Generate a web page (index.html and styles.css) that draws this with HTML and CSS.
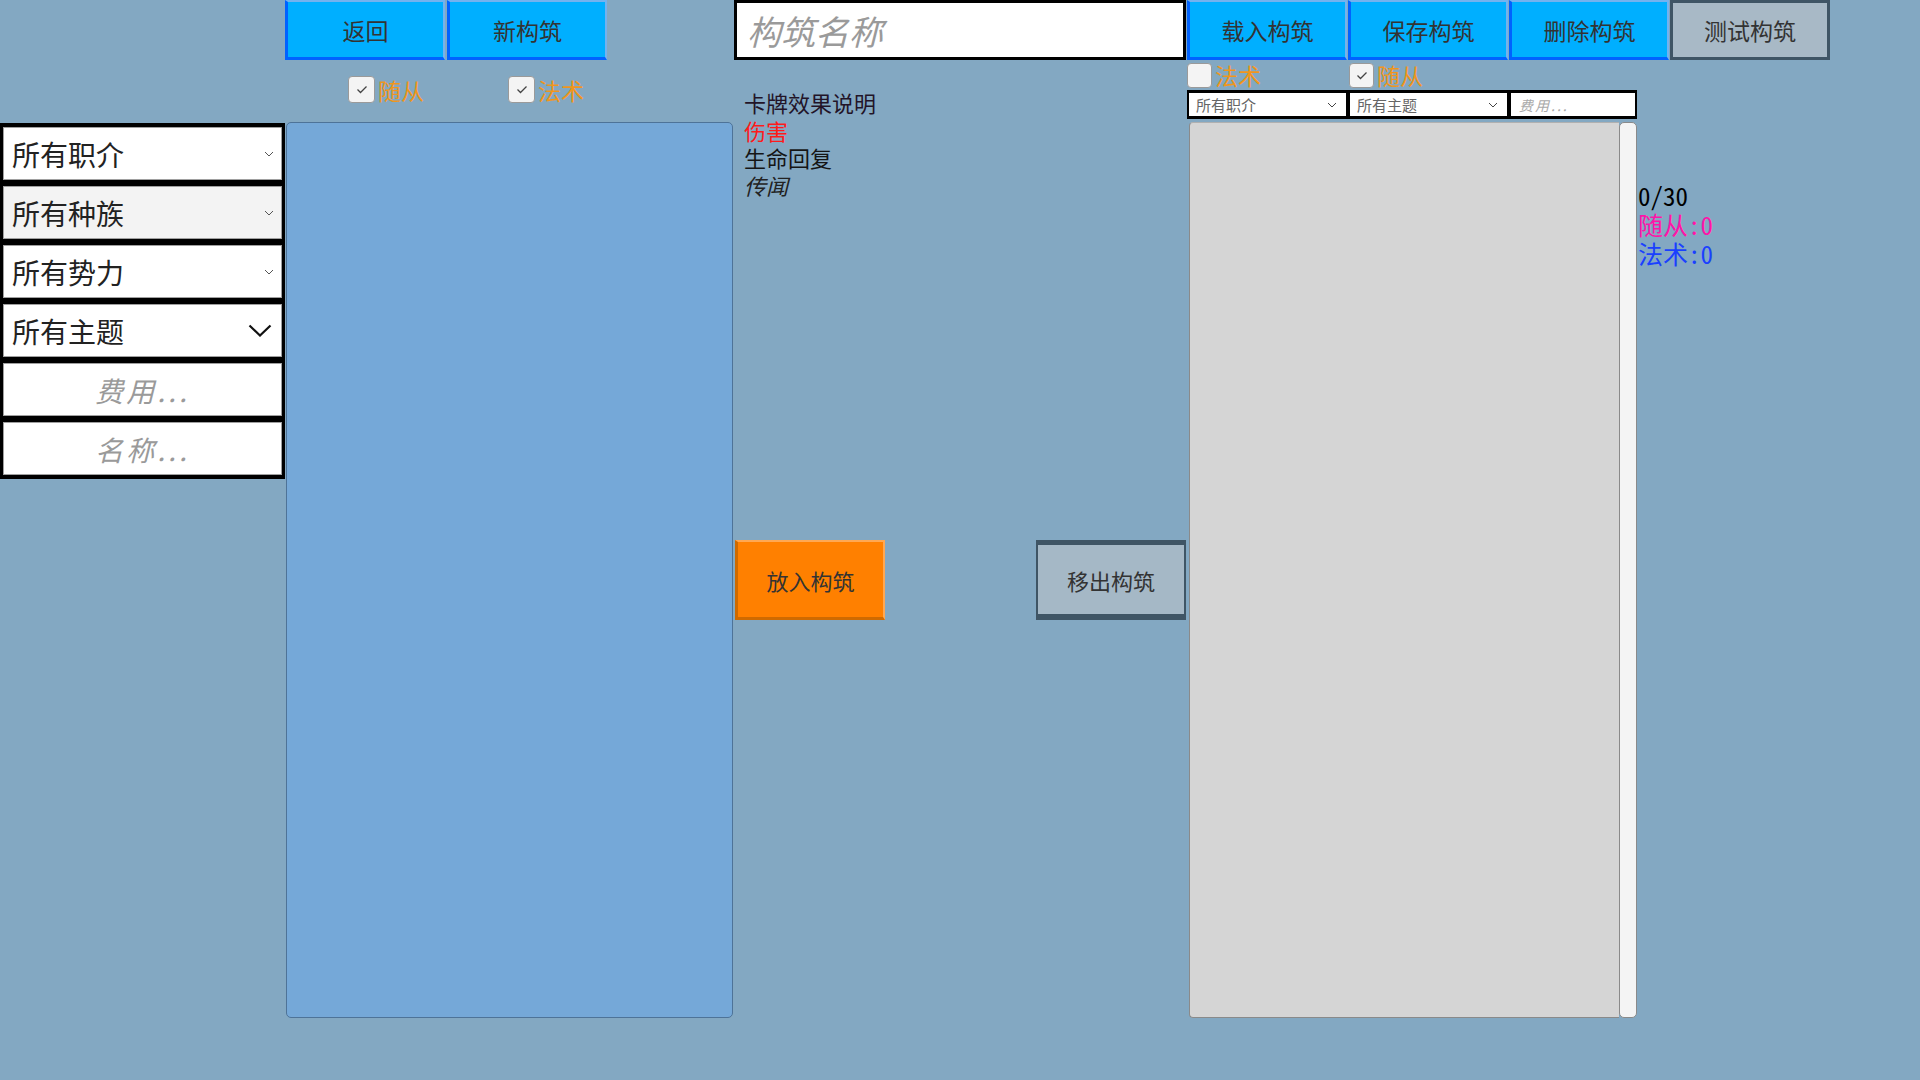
FILE: index.html
```html
<!DOCTYPE html>
<html lang="zh-CN">
<head>
<meta charset="UTF-8">
<title>构筑编辑</title>
<link rel="stylesheet" href="styles.css">
</head>
<body>

<div class="screen">

    <!-- top left: navigation -->
    <div class="btn-row nav-row">
        <button class="btn btn-blue">返回</button>
        <button class="btn btn-blue">新构筑</button>
    </div>

    <!-- deck name -->
    <input class="deck-name" type="text" placeholder="构筑名称">

    <!-- top right: deck actions -->
    <div class="btn-row deck-actions">
        <button class="btn btn-blue">载入构筑</button>
        <button class="btn btn-blue">保存构筑</button>
        <button class="btn btn-blue">删除构筑</button>
        <button class="btn btn-gray">测试构筑</button>
    </div>

    <!-- card type toggles for the pool -->
    <div class="pool-checks">
        <label class="check-item"><span class="box on"><svg width="12" height="9" viewBox="0 0 12 9"><path d="M1.5 4.5l3 3 6-6" fill="none" stroke="#444" stroke-width="1.3"/></svg></span>随从</label>
        <label class="check-item"><span class="box on"><svg width="12" height="9" viewBox="0 0 12 9"><path d="M1.5 4.5l3 3 6-6" fill="none" stroke="#444" stroke-width="1.3"/></svg></span>法术</label>
    </div>

    <!-- left filter column -->
    <div class="filters">
        <div class="select">所有职介<svg class="chev" width="10" height="6" viewBox="0 0 10 6"><path d="M1 1l4 4 4-4" fill="none" stroke="#555" stroke-width="1"/></svg></div>
        <div class="select hover">所有种族<svg class="chev" width="10" height="6" viewBox="0 0 10 6"><path d="M1 1l4 4 4-4" fill="none" stroke="#555" stroke-width="1"/></svg></div>
        <div class="select">所有势力<svg class="chev" width="10" height="6" viewBox="0 0 10 6"><path d="M1 1l4 4 4-4" fill="none" stroke="#555" stroke-width="1"/></svg></div>
        <div class="select">所有主题<svg class="chev big" width="24" height="13" viewBox="0 0 24 13"><path d="M1.5 1.5l10.5 10 10.5-10" fill="none" stroke="#111" stroke-width="2.2"/></svg></div>
        <input class="filter-input" type="text" placeholder="费用...">
        <input class="filter-input" type="text" placeholder="名称...">
    </div>

    <!-- card pool -->
    <div class="pool"></div>

    <!-- card info and move buttons -->
    <div class="middle">
        <div class="desc">
            <div class="desc-title">卡牌效果说明</div>
            <div class="kw-red">伤害</div>
            <div>生命回复</div>
            <div class="kw-italic">传闻</div>
        </div>
        <div class="move-row">
            <button class="btn btn-orange">放入构筑</button>
            <button class="btn btn-move-out">移出构筑</button>
        </div>
    </div>

    <!-- deck side filters -->
    <div class="deck-filters">
        <div class="deck-checks">
            <label class="check-item"><span class="box"></span>法术</label>
            <label class="check-item"><span class="box on"><svg width="12" height="9" viewBox="0 0 12 9"><path d="M1.5 4.5l3 3 6-6" fill="none" stroke="#444" stroke-width="1.3"/></svg></span>随从</label>
        </div>
        <div class="mini-selects">
            <div class="mini-select">所有职介<svg width="10" height="6" viewBox="0 0 10 6"><path d="M1 1l4 4 4-4" fill="none" stroke="#444" stroke-width="1"/></svg></div>
            <div class="mini-select">所有主题<svg width="10" height="6" viewBox="0 0 10 6"><path d="M1 1l4 4 4-4" fill="none" stroke="#444" stroke-width="1"/></svg></div>
            <input class="mini-input" type="text" placeholder="费用...">
        </div>
    </div>

    <!-- deck list -->
    <div class="deck-list">
        <div class="list-body"></div>
        <div class="scrollbar"></div>
    </div>

    <!-- deck counters -->
    <div class="stats">
        <div>0/30</div>
        <div class="stat-minion">随从:0</div>
        <div class="stat-spell">法术:0</div>
    </div>

</div>

</body>
</html>
```

FILE: styles.css
```css
body {
    margin: 0;
    background-color: #83a8c2;
    font-family: "Noto Sans CJK SC", "Noto Sans", sans-serif;
    overflow: hidden;
}

.screen {
    display: grid;
    grid-template-columns: 285px 449px 453px 451px 1fr;
    grid-template-rows: 60px 62px 896px;
    height: 1080px;
}

/* buttons */
.btn {
    font-family: "Noto Sans CJK SC", sans-serif;
    font-size: 23px;
    color: #333;
    padding: 0;
    cursor: pointer;
    box-sizing: border-box;
}

.btn-blue {
    background: #00afff;
    border-style: solid;
    border-width: 2px 2px 3px 3px;
    border-color: #74b2ee #74b2ee #0062ff #0062ff;
}

.btn-gray {
    background: #a8b9c6;
    border: 3px solid #3f5565;
}

.btn-orange {
    background: #ff8000;
    border-style: solid;
    border-width: 2px 2px 3px 3px;
    border-color: #ffa852 #ffa852 #cf6a00 #cf6a00;
    font-size: 22px;
}

.btn-move-out {
    background: #a5b8c6;
    border-style: solid;
    border-color: #3f5565;
    border-width: 5px 2px 6px 2px;
    font-size: 22px;
}

.btn-row {
    display: flex;
    gap: 2px;
}

.btn-row .btn {
    width: 160px;
    height: 60px;
}

.nav-row {
    grid-column: 2;
    grid-row: 1;
}

.deck-actions {
    grid-column: 4 / 6;
    grid-row: 1;
    gap: 1px;
}

/* deck name field */
.deck-name {
    grid-column: 3;
    grid-row: 1;
    width: 452px;
    height: 60px;
    box-sizing: border-box;
    border: 3px solid #000;
    padding: 0 10px;
    font-family: "Noto Sans CJK SC", sans-serif;
    font-size: 34px;
    background: #fff;
    outline: none;
}

.deck-name::placeholder {
    color: #9a9a9a;
    font-style: italic;
}

/* checkboxes */
.check-item {
    display: flex;
    align-items: center;
    gap: 3px;
    font-size: 23px;
    color: #f0961c;
    line-height: 26px;
}

.box {
    width: 25px;
    height: 25px;
    box-sizing: border-box;
    background: #f4f4f4;
    border: 1px solid #9a9a9a;
    border-radius: 4px;
    display: flex;
    align-items: center;
    justify-content: center;
}

.pool-checks {
    grid-column: 2;
    grid-row: 2;
    display: flex;
    padding: 16px 0 0 63px;
    gap: 84px;
    align-items: flex-start;
}

.pool-checks .box {
    width: 27px;
    height: 27px;
}

/* left filters */
.filters {
    grid-column: 1;
    grid-row: 3;
    align-self: start;
    margin-top: 1px;
    background: #000;
    padding: 4px 3px;
    display: flex;
    flex-direction: column;
    gap: 6px;
}

.select {
    height: 53px;
    box-sizing: border-box;
    background: #fff;
    border: 1px solid #a0a0a0;
    display: flex;
    align-items: center;
    justify-content: space-between;
    padding: 0 7px 0 8px;
    font-size: 28px;
    color: #222;
}

.select.hover {
    background: #f3f3f3;
}

.select .chev.big {
    margin-right: 2px;
}

.filter-input {
    height: 53px;
    box-sizing: border-box;
    border: 1px solid #a0a0a0;
    background: #fff;
    font-family: "Noto Sans CJK SC", sans-serif;
    font-size: 28px;
    text-align: center;
    outline: none;
}

.filter-input::placeholder {
    color: #9a9a9a;
    font-style: italic;
    letter-spacing: 3px;
}

/* card pool panel */
.pool {
    grid-column: 2;
    grid-row: 3;
    margin-left: 1px;
    width: 447px;
    box-sizing: border-box;
    background: #75a8d8;
    border: 1px solid #4e7398;
    border-radius: 5px;
}

/* middle column */
.middle {
    grid-column: 3;
    grid-row: 2 / 4;
    padding: 29px 1px 0 1px;
}

.desc {
    padding-left: 9px;
    font-size: 22px;
    line-height: 27.5px;
    color: #151515;
}

.desc-title {
    color: #221428;
}

.kw-red {
    color: #ff1a1a;
}

.kw-italic {
    font-style: italic;
    color: #222;
}

.move-row {
    margin-top: 341px;
    display: flex;
    justify-content: space-between;
}

.move-row .btn {
    width: 150px;
    height: 80px;
}

/* deck side */
.deck-filters {
    grid-column: 4;
    grid-row: 2;
    padding-top: 2px;
}

.deck-checks {
    display: flex;
    gap: 84px;
    height: 26px;
}

.deck-checks .check-item {
    width: 78px;
}

.mini-selects {
    margin-top: 2px;
    background: #000;
    display: flex;
    gap: 4px;
    padding: 3px 2px;
    height: 29px;
    box-sizing: border-box;
    width: 450px;
}

.mini-select {
    width: 157px;
    background: #fff;
    display: flex;
    align-items: center;
    justify-content: space-between;
    padding: 0 9px 0 7px;
    box-sizing: border-box;
    font-size: 15px;
    color: #666;
}

.mini-input {
    flex: 1;
    border: none;
    padding: 0 8px;
    font-family: "Noto Sans CJK SC", sans-serif;
    font-size: 14px;
    outline: none;
    min-width: 0;
}

.mini-input::placeholder {
    color: #aaa;
    font-style: italic;
    letter-spacing: 2px;
}

.deck-list {
    grid-column: 4;
    grid-row: 3;
    margin-left: 2px;
    width: 448px;
    display: flex;
}

.list-body {
    flex: 1;
    background: #d5d5d5;
    border: 1px solid #8a8a8a;
    border-top-color: #b0b0b0;
    border-right: none;
    border-radius: 4px 0 0 4px;
}

.scrollbar {
    width: 18px;
    box-sizing: border-box;
    background: #f4f4f4;
    border: 1px solid #8a8a8a;
    border-radius: 5px;
}

/* counters */
.stats {
    grid-column: 5;
    grid-row: 3;
    margin-top: 59px;
    font-family: "Noto Sans Mono CJK SC", "Noto Sans CJK SC", monospace;
    font-size: 25px;
    line-height: 29px;
    color: #000;
}

.stat-minion {
    color: #ff14a8;
}

.stat-spell {
    color: #1a40ff;
}
```
